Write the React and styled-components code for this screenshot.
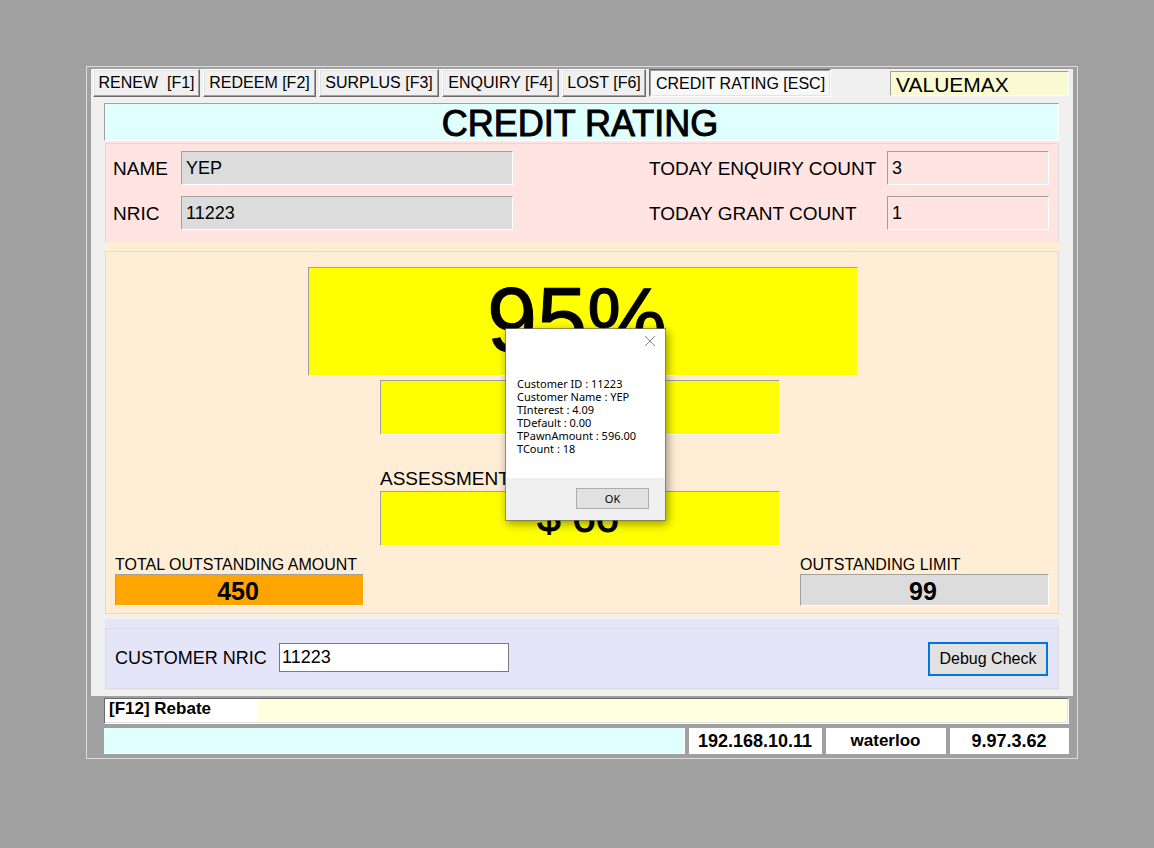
import React from "react";
import styled, { createGlobalStyle, css } from "styled-components";

const GlobalStyle = createGlobalStyle`
  * { box-sizing: border-box; }
  body {
    margin: 0;
    background: #a0a0a0;
    color: #000;
    font-family: "Liberation Sans", Arial, sans-serif;
    font-size: 19px;
    line-height: 20px;
  }
  button, input { font: inherit; color: inherit; border-radius: 0; margin: 0; }
`;

const sunken = css`
  border: 1px solid;
  border-color: #a0a0a0 #fff #fff #a0a0a0;
`;

const Page = styled.div`
  padding: 66px 76px 24px 86px;
`;

const Frame = styled.div`
  position: relative;
  border: 1px solid #dcdcdc;
  padding: 2px 4px 4px;
`;

const Workspace = styled.main`
  background: #f0f0f0;
  padding: 0 14px 6px 13px;
`;

const Toolbar = styled.nav`
  display: flex;
  align-items: flex-start;
  gap: 3px;
  height: 34px;
  margin: 0 -10px 0 -11px;
`;

const Tab = styled.button`
  width: ${(p) => p.$width}px;
  height: 28px;
  padding: 0;
  white-space: pre;
  font-size: 16px;
  line-height: 20px;
  background: #f0f0f0;
  border: 1px solid;
  border-color: #fff #696969 #696969 #fff;
  box-shadow: inset -1px -1px #a0a0a0, inset 1px 1px #e3e3e3;
  ${(p) =>
    p.$active &&
    css`
      padding: 1px 0 0 1px;
      background: #f8f8f8;
      border-color: #696969 #fff #fff #696969;
      box-shadow: inset -1px -1px #e3e3e3, inset 1px 1px #a0a0a0;
    `}
`;

const Branch = styled.div`
  ${sunken}
  width: 179px;
  height: 25px;
  margin: 2px 0 0 auto;
  padding: 2px 5px 0;
  font-size: 21px;
  line-height: 22px;
  background: #fafad2;
`;

const Title = styled.h1`
  ${sunken}
  margin: 0;
  height: 38px;
  padding-right: 3px;
  text-align: center;
  font-size: 36px;
  font-weight: 400;
  line-height: 40px;
  -webkit-text-stroke: 1px #000;
  background: #e0ffff;
`;

const Panel = styled.section`
  margin-left: 1px;
  padding-top: ${(p) => p.$top}px;
  padding-bottom: ${(p) => p.$bottom || 0}px;
  background: ${(p) => p.$color};
`;

const Group = styled.div`
  border: 1px solid #dcdcdc;
`;

const Label = styled.label`
  font-size: ${(p) => p.$size || 19}px;
  line-height: 20px;
  white-space: nowrap;
`;

const CustomerGroup = styled(Group)`
  display: grid;
  grid-template-columns: 68px minmax(0, 332px) 1fr 238px 162px;
  row-gap: 11px;
  align-items: center;
  padding: 7px 9px 12px 7px;
  border-bottom: 0;

  ${Label} {
    padding-top: 2px;
  }
`;

const ReadOnly = styled.input`
  ${sunken}
  width: 100%;
  min-width: 0;
  height: 34px;
  padding: 0 4px;
  font-size: 18px;
  background: ${(p) => p.$color || "#dcdcdc"};
  outline: none;
`;

const Total = styled(ReadOnly)`
  display: block;
  height: 32px;
  padding: 2px 3px 0 0;
  text-align: center;
  font-size: 25px;
  font-weight: 700;
`;

const ScoreGroup = styled(Group)`
  padding: 15px 9px 7px;
`;

const Results = styled.div`
  display: flex;
  flex-direction: column;
  align-items: center;
  padding-left: 2px;
`;

const Yellow = styled.output`
  ${sunken}
  display: flex;
  align-items: center;
  justify-content: center;
  width: 100%;
  height: 55px;
  padding: 0 4px 2px 0;
  font-size: 42px;
  line-height: 48px;
  -webkit-text-stroke: 1px #000;
  background: #ff0;
`;

const Percentage = styled(Yellow)`
  max-width: 550px;
  height: 109px;
  padding: 0 12px 4px 0;
  font-size: 90px;
  line-height: 96px;
`;

const ResultColumn = styled.div`
  display: flex;
  flex-direction: column;
  width: 400px;
  margin: 4px 6px 0 0;
`;

const AssessmentLabel = styled(Label)`
  margin: 34px 0 2px;
`;

const Totals = styled.div`
  display: flex;
  justify-content: space-between;
  margin-top: 10px;
`;

const TotalField = styled.div`
  display: flex;
  flex-direction: column;
  width: 249px;

  ${Label} {
    line-height: 18px;
  }
`;

const SearchGroup = styled(Group)`
  display: flex;
  align-items: center;
  justify-content: space-between;
  height: 61px;
  padding: 0 10px 0 9px;
`;

const SearchField = styled.div`
  display: grid;
  grid-template-columns: 164px 230px;
  align-items: center;
  padding-bottom: 2px;
`;

const SearchInput = styled.input`
  width: 100%;
  height: 29px;
  padding: 0 2px;
  font-size: 18px;
  border: 1px solid #7a7a7a;
  background: #fff;
  outline: none;
`;

const DebugButton = styled.button`
  width: 120px;
  height: 34px;
  padding: 0;
  font-size: 16px;
  border: 2px solid #0078d7;
  background: #e1e1e1;
`;

const Spacer = styled.div`
  height: 4px;
`;

const StatusArea = styled.footer`
  padding: 2px 4px 0 13px;
  font-size: 17px;
  font-weight: 700;
`;

const Message = styled.div`
  height: 26px;
  background: #ffffe0;
  border: 1px solid;
  border-color: #696969 #fff #fff #696969;
  box-shadow: inset -1px -1px #e3e3e3;
`;

const Shortcut = styled.div`
  width: 153px;
  height: 23px;
  padding: 0 4px;
  background: #fff;
`;

const StatusRow = styled.div`
  display: flex;
  gap: 4px;
  margin-top: 4px;
`;

const StatusCell = styled.div`
  flex: ${(p) => (p.$width ? `0 0 ${p.$width}px` : "1")};
  height: 26px;
  text-align: center;
  font-size: ${(p) => (p.$numeric ? 18 : 17)}px;
  line-height: 26px;
  background: ${(p) => p.$color || "#fff"};
  border-right: 1px solid #fff;
  border-bottom: 1px solid #fff;
`;

const Dialog = styled.div`
  position: absolute;
  top: 261px;
  left: calc(50% - 77px);
  display: flex;
  flex-direction: column;
  width: 161px;
  height: 193px;
  border: 1px solid rgba(112, 112, 112, 0.7);
  background: #fff;
  background-clip: padding-box;
  box-shadow: 2px 3px 9px rgba(0, 0, 0, 0.4);
  font-family: "Noto Sans", "Open Sans", sans-serif;
  font-size: 11px;
  line-height: 13px;
`;

const CloseButton = styled.button`
  display: flex;
  align-self: flex-end;
  margin: 6px 9px 0 0;
  padding: 0;
  border: 0;
  background: none;
`;

const Details = styled.div`
  flex: 1;
  padding: 30px 11px 0;
  white-space: nowrap;
`;

const DialogFooter = styled.div`
  display: flex;
  justify-content: flex-end;
  height: 42px;
  padding: 10px 16px;
  background: #f0f0f0;
`;

const OkButton = styled.button`
  width: 73px;
  height: 21px;
  padding: 0;
  border: 1px solid #adadad;
  background: #e1e1e1;
`;

const tabs = [
  { text: "RENEW  [F1]", width: 107 },
  { text: "REDEEM [F2]", width: 113 },
  { text: "SURPLUS [F3]", width: 120 },
  { text: "ENQUIRY [F4]", width: 117 },
  { text: "LOST [F6]", width: 84 },
  { text: "CREDIT RATING [ESC]", width: 182, active: true },
];

const details = [
  "Customer ID : 11223",
  "Customer Name : YEP",
  "TInterest : 4.09",
  "TDefault : 0.00",
  "TPawnAmount : 596.00",
  "TCount : 18",
];

export default function App() {
  return (
    <Page>
      <GlobalStyle />
      <Frame>
        <Workspace>
          <Toolbar>
            {tabs.map((tab) => (
              <Tab key={tab.text} type="button" $width={tab.width} $active={tab.active}>
                {tab.text}
              </Tab>
            ))}
            <Branch>VALUEMAX</Branch>
          </Toolbar>
          <Title>CREDIT RATING</Title>
          <Panel $color="#ffe4e1" $top={2}>
            <CustomerGroup>
              <Label htmlFor="name">NAME</Label>
              <ReadOnly id="name" readOnly value="YEP" />
              <span />
              <Label htmlFor="enquiries">TODAY ENQUIRY COUNT</Label>
              <ReadOnly id="enquiries" readOnly value="3" $color="#ffe4e1" />
              <Label htmlFor="nric">NRIC</Label>
              <ReadOnly id="nric" readOnly value="11223" />
              <span />
              <Label htmlFor="grants">TODAY GRANT COUNT</Label>
              <ReadOnly id="grants" readOnly value="1" $color="#ffe4e1" />
            </CustomerGroup>
          </Panel>
          <Panel $color="#ffeed5" $top={9} $bottom={1}>
            <ScoreGroup>
              <Results>
                <Percentage>95%</Percentage>
                <ResultColumn>
                  <Yellow aria-label="Rating" />
                  <AssessmentLabel as="span">ASSESSMENT</AssessmentLabel>
                  <Yellow>$ 66</Yellow>
                </ResultColumn>
              </Results>
              <Totals>
                <TotalField>
                  <Label $size={16} htmlFor="total">TOTAL OUTSTANDING AMOUNT</Label>
                  <Total id="total" readOnly value="450" $color="#ffa500" />
                </TotalField>
                <TotalField>
                  <Label $size={16} htmlFor="limit">OUTSTANDING LIMIT</Label>
                  <Total id="limit" readOnly value="99" />
                </TotalField>
              </Totals>
            </ScoreGroup>
          </Panel>
          <Spacer />
          <Panel $color="#e5e5f9" $top={9} $bottom={1}>
            <SearchGroup>
              <SearchField>
                <Label $size={18} htmlFor="search">CUSTOMER NRIC</Label>
                <SearchInput id="search" defaultValue="11223" />
              </SearchField>
              <DebugButton type="button">Debug Check</DebugButton>
            </SearchGroup>
          </Panel>
        </Workspace>
        <StatusArea>
          <Message>
            <Shortcut>[F12] Rebate</Shortcut>
          </Message>
          <StatusRow>
            <StatusCell $color="#e0ffff" />
            <StatusCell $width={133} $numeric>192.168.10.11</StatusCell>
            <StatusCell $width={120}>waterloo</StatusCell>
            <StatusCell $width={119} $numeric>9.97.3.62</StatusCell>
          </StatusRow>
        </StatusArea>
        <Dialog role="dialog" aria-label="Customer details">
          <CloseButton type="button" aria-label="Close">
            <svg width="12" height="12" viewBox="0 0 12 12" stroke="#8a8a8a" fill="none">
              <path d="M1 1 11 11M11 1 1 11" />
            </svg>
          </CloseButton>
          <Details>
            {details.map((line) => (
              <div key={line}>{line}</div>
            ))}
          </Details>
          <DialogFooter>
            <OkButton type="button">OK</OkButton>
          </DialogFooter>
        </Dialog>
      </Frame>
    </Page>
  );
}
